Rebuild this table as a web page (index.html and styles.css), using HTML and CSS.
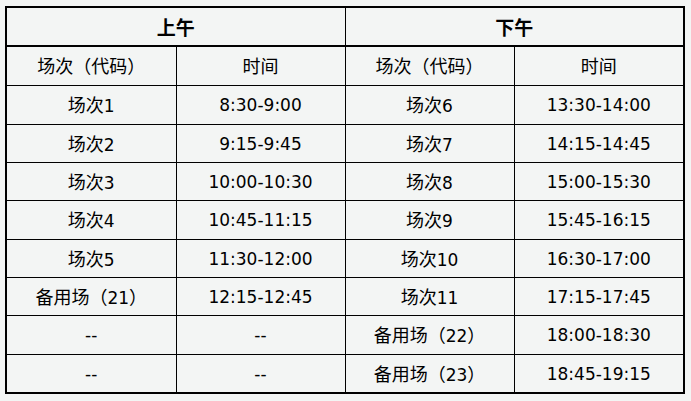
FILE: index.html
```html
<!DOCTYPE html>
<html lang="zh-CN">
<head>
<meta charset="utf-8">
<link rel="stylesheet" href="styles.css">
</head>
<body>
<div class="wrap">
<table class="sched">
  <colgroup>
    <col class="c1"><col class="c2"><col class="c3"><col class="c4">
  </colgroup>
  <tr class="head">
    <th colspan="2">上午</th>
    <th colspan="2">下午</th>
  </tr>
  <tr class="sub"><td><span class="zh">场次（代码）</span></td><td><span class="zh">时间</span></td><td><span class="zh">场次（代码）</span></td><td><span class="zh">时间</span></td></tr>
  <tr class="r38"><td><span class="zh">场次</span>1</td><td>8:30-9:00</td><td><span class="zh">场次</span>6</td><td>13:30-14:00</td></tr>
  <tr class="r37"><td><span class="zh">场次</span>2</td><td>9:15-9:45</td><td><span class="zh">场次</span>7</td><td>14:15-14:45</td></tr>
  <tr class="r37"><td><span class="zh">场次</span>3</td><td>10:00-10:30</td><td><span class="zh">场次</span>8</td><td>15:00-15:30</td></tr>
  <tr class="r38"><td><span class="zh">场次</span>4</td><td>10:45-11:15</td><td><span class="zh">场次</span>9</td><td>15:45-16:15</td></tr>
  <tr class="r37"><td><span class="zh">场次</span>5</td><td>11:30-12:00</td><td><span class="zh">场次</span>10</td><td>16:30-17:00</td></tr>
  <tr class="r37"><td><span class="zh">备用场（</span>21<span class="zh">）</span></td><td>12:15-12:45</td><td><span class="zh">场次</span>11</td><td>17:15-17:45</td></tr>
  <tr class="r38"><td>--</td><td>--</td><td><span class="zh">备用场（</span>22<span class="zh">）</span></td><td>18:00-18:30</td></tr>
  <tr class="r37"><td>--</td><td>--</td><td><span class="zh">备用场（</span>23<span class="zh">）</span></td><td>18:45-19:15</td></tr>
</table>
</div>
</body>
</html>
```
FILE: styles.css
```css
html, body {
  margin: 0;
  padding: 0;
  background: #f3f5f4;
}
.wrap {
  padding: 6px 0 0 5px;
}
.sched {
  border-collapse: collapse;
  table-layout: fixed;
  width: 680px;
  border: 2px solid #000;
  font-family: "DejaVu Sans", "Noto Sans CJK SC", sans-serif;
  font-size: 17px;
  color: #000;
}
.zh {
  font-family: "Noto Sans CJK SC", sans-serif;
  font-size: 18px;
}
.c1 { width: 170px; }
.c2 { width: 169px; }
.c3 { width: 169px; }
.c4 { width: 170px; }
.sched th, .sched td {
  border: 1px solid #000;
  padding: 0;
  text-align: center;
  vertical-align: middle;
  line-height: 20px;
}
.sched th {
  font-family: "Noto Sans CJK SC", sans-serif;
  font-size: 19px;
  font-weight: bold;
  border-bottom: 2px solid #000;
}
.head th { height: 37px; }
.sub td { height: 38px; }
.r38 td { height: 38px; }
.r37 td { height: 37px; }
```
